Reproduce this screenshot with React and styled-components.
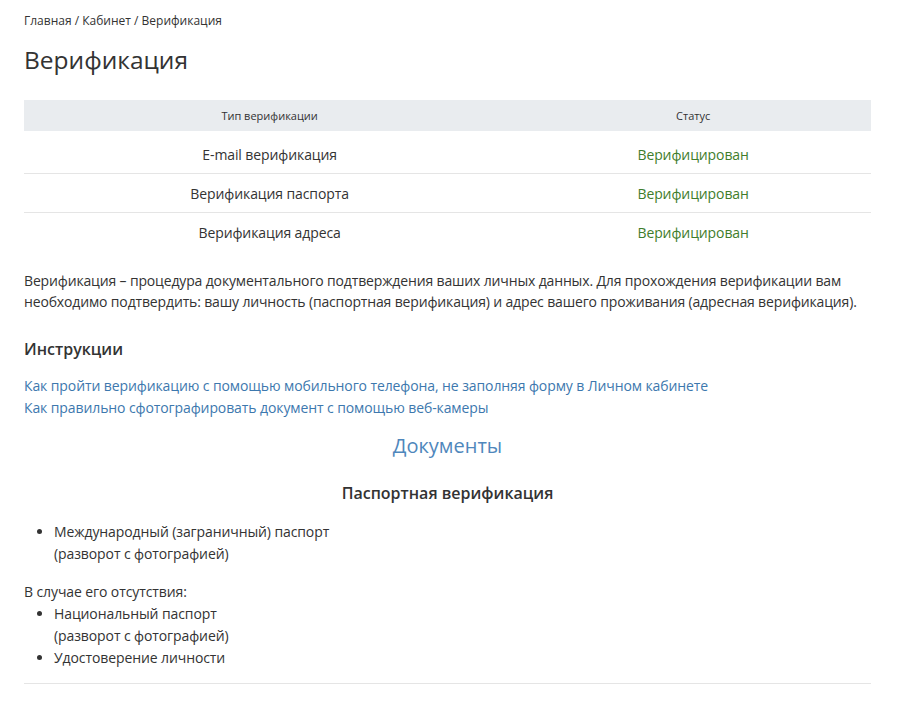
import React from 'react';
import styled, { createGlobalStyle } from 'styled-components';

const GlobalStyle = createGlobalStyle`
  html, body {
    margin: 0;
    padding: 0;
    background: #fff;
  }
  body {
    font-family: "Open Sans", "Noto Sans", sans-serif;
    color: #333;
  }
`;

const Page = styled.div`
  width: 847px;
  padding: 13px 24px 16px 24px;
`;

const Breadcrumbs = styled.div`
  font-size: 12px;
  line-height: 16px;
  color: #333;
`;

const Title = styled.h1`
  margin: 14px 0 23px;
  font-size: 24.5px;
  font-weight: 400;
  line-height: 34px;
  color: #333;
`;

const Table = styled.table`
  width: 100%;
  border-collapse: collapse;
  text-align: center;

  th {
    background: #e9ecef;
    font-size: 11px;
    font-weight: 400;
    height: 31px;
    padding: 0;
  }

  td {
    font-size: 14px;
    letter-spacing: -0.1px;
    height: 39px;
    padding: 2px 0 0;
    box-sizing: border-box;
    border-top: 1px solid #e5e5e5;
  }

  tr:first-child td {
    border-top: none;
    height: 42px;
    padding-top: 6px;
  }
`;

const Status = styled.span`
  color: #3f7d2c;
`;

const Text = styled.p`
  margin: 19px 0 0;
  font-size: 14px;
  letter-spacing: -0.15px;
  line-height: 21px;
`;

const Subtitle = styled.h3`
  margin: 25px 0 14px;
  font-size: 16px;
  font-weight: 600;
  line-height: 24px;
`;

const Link = styled.a`
  display: block;
  font-size: 14px;
  letter-spacing: -0.1px;
  line-height: 22px;
  color: #3d78ae;
  text-decoration: none;
`;

const Section = styled.h2`
  margin: 12px 0 0;
  text-align: center;
  font-size: 20px;
  font-weight: 400;
  line-height: 30px;
  color: #4f87bc;
`;

const SubSection = styled.h4`
  margin: 20px 0 16px;
  text-align: center;
  font-size: 16px;
  font-weight: 600;
  line-height: 24px;
`;

const List = styled.ul`
  margin: 0 0 ${p => p.$gap || 0}px;
  padding-left: 30px;
  font-size: 14px;
  letter-spacing: -0.1px;
  line-height: 22px;
`;

const Note = styled.div`
  font-size: 14px;
  letter-spacing: -0.1px;
  line-height: 22px;
`;

const Divider = styled.hr`
  margin: 14px 0 0;
  border: none;
  border-top: 1px solid #e5e5e5;
`;

const rows = [
  'E-mail верификация',
  'Верификация паспорта',
  'Верификация адреса',
];

export default function App() {
  return (
    <Page>
      <GlobalStyle />
      <Breadcrumbs>Главная / Кабинет / Верификация</Breadcrumbs>
      <Title>Верификация</Title>
      <Table>
        <thead>
          <tr>
            <th style={{ width: '58%' }}>Тип верификации</th>
            <th>Статус</th>
          </tr>
        </thead>
        <tbody>
          {rows.map(r => (
            <tr key={r}>
              <td>{r}</td>
              <td><Status>Верифицирован</Status></td>
            </tr>
          ))}
        </tbody>
      </Table>
      <Text>
        Верификация – процедура документального подтверждения ваших личных данных. Для прохождения верификации вам
        необходимо подтвердить: вашу личность (паспортная верификация) и адрес вашего проживания (адресная верификация).
      </Text>
      <Subtitle>Инструкции</Subtitle>
      <Link href="#">Как пройти верификацию с помощью мобильного телефона, не заполняя форму в Личном кабинете</Link>
      <Link href="#">Как правильно сфотографировать документ с помощью веб-камеры</Link>
      <Section>Документы</Section>
      <SubSection>Паспортная верификация</SubSection>
      <List $gap={16}>
        <li>Международный (заграничный) паспорт<br />(разворот с фотографией)</li>
      </List>
      <Note>В случае его отсутствия:</Note>
      <List>
        <li>Национальный паспорт<br />(разворот с фотографией)</li>
        <li>Удостоверение личности</li>
      </List>
      <Divider />
    </Page>
  );
}
